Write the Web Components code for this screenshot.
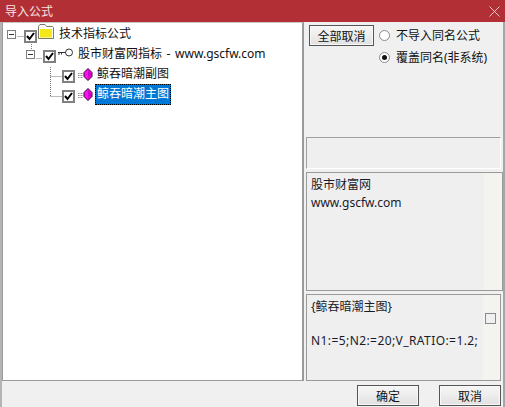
<!DOCTYPE html>
<html lang="zh"><head><meta charset="utf-8">
<style>
html,body{margin:0;padding:0;width:505px;height:407px;overflow:hidden;background:#f0f0f0;font:12px "Noto Sans","Noto Sans CJK SC",sans-serif;color:#111}
</style></head><body>
<import-dialog>
  <span slot="title">导入公式</span>
  <formula-tree slot="tree">
    <tree-row depth="0" expander check icon="folder">技术指标公式</tree-row>
    <tree-row depth="1" expander check icon="key"><span style="word-spacing:1.5px">股市财富网指标 - www.gscfw.com</span></tree-row>
    <tree-row depth="2" check icon="gem">鲸吞暗潮副图</tree-row>
    <tree-row depth="2" check icon="gem" selected>鲸吞暗潮主图</tree-row>
  </formula-tree>
  <div slot="options" style="display:flex;gap:5px;align-items:flex-start;padding-left:3px">
    <win-button w="65" h="21">全部取消</win-button>
    <div style="display:flex;flex-direction:column;gap:4px;padding-top:1px">
      <win-radio>不导入同名公式</win-radio>
      <win-radio checked>覆盖同名(非系统)</win-radio>
    </div>
  </div>
  <inset-box slot="blank" sunken style="height:32px;margin-right:2px"></inset-box>
  <inset-box slot="info" style="height:119px;background:linear-gradient(to right,#efefef 177px,#f3f3f0 177px)"><div style="padding:3px 4px;line-height:18px">股市财富网<br>www.gscfw.com</div></inset-box>
  <inset-box slot="code" style="height:87px;margin-right:2px;background:linear-gradient(to right,#efefef 176px,#f3f3f0 176px)">
    <div style="padding:3px 4px;line-height:17px">{鲸吞暗潮主图}<br><br><span style="letter-spacing:.42px">N1:=5;N2:=20;V_RATIO:=1.2;</span></div>
    <span style="position:absolute;right:4px;top:18px;width:9px;height:9px;border:1px solid #8a8a8a;background:#f0f0f0"></span>
  </inset-box>
  <win-button slot="ok" w="62" h="21">确定</win-button>
  <win-button slot="cancel" w="62" h="21">取消</win-button>
</import-dialog>
<script>
function def(name,css,html,init){customElements.define(name,class extends HTMLElement{connectedCallback(){if(this.shadowRoot)return;const r=this.attachShadow({mode:'open'});r.innerHTML='<style>'+css+'</style>'+(typeof html==='function'?html(this):html);init&&init(this,r)}})}
def('import-dialog',`
:host{display:flex;flex-direction:column;width:505px;height:407px;background:#f0f0f0}
.bar{height:22px;flex:none;background:#b22f35;color:#f6e4e4;display:flex;align-items:center;justify-content:space-between;padding:0 5px 0 5px}
.wrap{flex:1;border-right:2px solid #a6a6a6;border-left:2px solid #b4b4b4}
.main{display:flex;height:359px}
.tree{width:302px;box-sizing:border-box;flex:none;border:1px solid #9a9a9a;border-width:1px 2px 1px 1px;border-top-color:#c8c8c8;background:#fff}
.side{flex:1;padding:0 0 0 2px;display:flex;flex-direction:column}
.opts{padding-top:3px;height:116px;box-sizing:border-box}
.gap{height:3px}
.foot{display:flex;justify-content:flex-end;gap:20px;padding:4px 2px 0 0}
svg{display:block}`,
`<div class="bar"><slot name="title"></slot><svg width="11" height="11" viewBox="0 0 11 11"><path d="M.5.5l10 10M10.5.5l-10 10" stroke="#e9c9ca" fill="none"/></svg></div>
<div class="wrap"><div class="main"><div class="tree"><slot name="tree"></slot></div>
<div class="side"><div class="opts"><slot name="options"></slot></div><slot name="blank"></slot><div class="gap"></div><slot name="info"></slot><div class="gap"></div><slot name="code"></slot></div></div>
<div class="foot"><slot name="ok"></slot><slot name="cancel"></slot></div></div>`);
def('formula-tree',`:host{display:block;position:relative;padding-top:1px}
svg{position:absolute;left:0;top:0}`,
`<svg width="110" height="100" fill="none" stroke="#777" stroke-dasharray="1 1"><path d="M14.500 13.500h7M28.500 21v10M33.500 35.500h6M47.500 44v29M47.500 53.500h12M47.500 73.500h12"/></svg><slot></slot>`);
const ICONS={
folder:`<svg width="16" height="15" viewBox="0 0 16 15" style="margin:-5px 5px 0 1px"><path d="M.5 14.500V2.500l1.500-2h5l1.500 2h6l1 1v11z" fill="#fff" stroke="#77776a"/><path d="M2 5h12v8.500H2z" fill="#f2e81a"/><path d="M3 3h3v1H3z" fill="#fff6a0"/></svg>`,
key:`<svg width="15" height="9" viewBox="0 0 15 9" style="margin:-3px 5px 0 2px"><circle cx="11" cy="4.500" r="3.500" fill="#fff" stroke="#333"/><path d="M0 4.500h7.500M1 4.500v2.500M3.500 4.500v2" stroke="#333" fill="none"/></svg>`,
gem:`<svg width="15" height="13" viewBox="0 0 15 13" style="margin:0 4px 0 3px"><path d="M0 5.500h5M0 7.500h5M0 9.500h5" stroke="#8a8a8a" stroke-dasharray="1 .5"/><path d="M10 .5l4 4v4l-4 4-4-4v-4z" fill="#ff10f0" stroke="#300030"/><path d="M10 2v9l3-3V5z" fill="#d000c8"/></svg>`};
def('tree-row',`:host{display:flex;align-items:center;height:20px;white-space:nowrap;position:relative;z-index:1;font-size:12px}
.exp{width:9px;height:9px;border:1px solid #7f7f7f;box-sizing:border-box;flex:none;margin-right:8px;position:relative;background:#fff}
.exp:after{content:"";position:absolute;left:1px;right:1px;top:3px;height:1px;background:#333}
.noexp{width:17px;flex:none}
.chk{box-sizing:border-box;width:13px;height:13px;border:2px solid #808080;background:#fff;flex:none;margin-top:4px}
.chk svg{display:block}
svg{flex:none}
.t{line-height:16px}
.sel{background:#0078d7;color:#fff;outline:1px dotted #000;outline-offset:-1px;padding:2px 2px 3px;margin-left:-2px;line-height:16px;margin-top:1px}`,
e=>{const d=+e.getAttribute('depth');const ind=4+d*19;
return `<span style="width:${ind}px;flex:none"></span>${e.hasAttribute('expander')?'<span class="exp"></span>':'<span class="noexp"></span>'}<span class="chk"><svg width="9" height="9" viewBox="0 0 9 9"><path d="M1 4l2.500 3L8 1" fill="none" stroke="#000" stroke-width="2"/></svg></span>${ICONS[e.getAttribute('icon')]}<span class="${e.hasAttribute('selected')?'sel':'t'}"><slot></slot></span>`});
def('win-button',`:host{display:inline-flex;box-sizing:border-box;align-items:center;justify-content:center;border:1px solid #555;background:linear-gradient(#f6f6f6,#ededed 50%,#e0e0e0);box-shadow:inset 0 0 0 1px #f8f8f8;color:#111;flex:none}`,
`<slot></slot>`,e=>{e.style.width=e.getAttribute('w')+'px';e.style.height=e.getAttribute('h')+'px'});
def('win-radio',`:host{display:flex;align-items:center;gap:6px;height:18px;white-space:nowrap}
.r{width:11px;height:11px;border-radius:50%;box-sizing:border-box;border:1px solid #8a8a8a;background:#fff;display:flex;align-items:center;justify-content:center;flex:none}
.d{width:5px;height:5px;border-radius:50%;background:#111}`,
e=>`<span class="r">${e.hasAttribute('checked')?'<span class="d"></span>':''}</span><slot></slot>`);
def('inset-box',`:host{display:block;box-sizing:border-box;border:1px solid #9a9a9a;background:#efefef;position:relative;flex:none;color:#1a1a2a}
:host([sunken]){border-color:#a0a0a0 #fff #fff #a0a0a0}`,`<slot></slot>`);
</script>
</body></html>
